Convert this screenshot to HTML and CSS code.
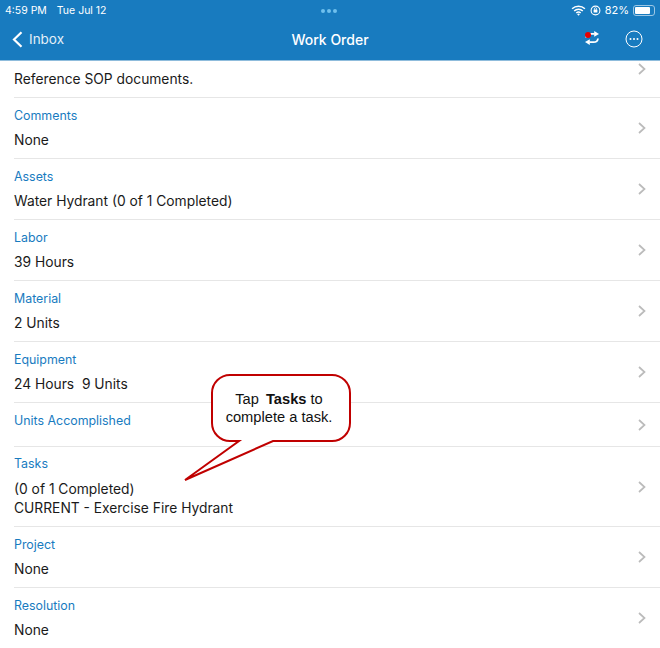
FILE: index.html
```html
<!DOCTYPE html>
<html lang="en">
<head>
<meta charset="utf-8">
<title>Work Order</title>
<link rel="stylesheet" href="styles.css">
</head>
<body>
<div class="page">
  <header class="header">
    <div class="status">
      <div class="status-left"><span>4:59 PM</span><span>Tue Jul 12</span></div>
      <div class="dots"><i></i><i></i><i></i></div>
      <div class="status-right">
        <svg class="wifi" width="15" height="11" viewBox="0 0 16 12"><path d="M1 4.200a10 10 0 0 1 14 0M3.300 6.600a6.800 6.800 0 0 1 9.400 0M5.600 8.800a3.400 3.400 0 0 1 4.800 0" fill="none" stroke="#fff" stroke-width="1.600"/><path d="M8 11.600 6.500 10a2.200 2.200 0 0 1 3 0z" fill="#fff"/></svg>
        <svg class="lock" width="11" height="11" viewBox="0 0 11 11"><circle cx="5.500" cy="5.500" r="4.400" fill="none" stroke="#fff" stroke-width="1.100"/><rect x="3.600" y="4.600" width="3.800" height="3" rx=".5" fill="#fff"/><path d="M4.400 4.800V3.800a1.100 1.100 0 0 1 2.200 0v1" fill="none" stroke="#fff" stroke-width=".8"/></svg>
        <span class="pct">82%</span>
        <div class="battery"><div class="battery-fill"></div></div>
      </div>
    </div>
    <div class="nav">
      <div class="back">
        <svg width="11" height="17" viewBox="0 0 11 17"><path d="M9.500 1.200 2 8.500l7.500 7.300" fill="none" stroke="#fff" stroke-width="2.200"/></svg>
        <span>Inbox</span>
      </div>
      <div class="title">Work Order</div>
      <div class="actions">
        <div class="sync">
          <svg width="14" height="14" viewBox="0 0 14 14"><path d="M1 6.500C1.300 3.800 3.400 2.800 5.500 2.800H9.500" fill="none" stroke="#fff" stroke-width="1.800"/><path d="M9.200 0 14 2.900 9.200 5.800z" fill="#fff"/><path d="M13 7.500C12.700 10.200 10.600 11.200 8.500 11.200H4.500" fill="none" stroke="#fff" stroke-width="1.800"/><path d="M4.800 14 0 11.100 4.800 8.200z" fill="#fff"/></svg>
          <span class="sync-dot"></span>
        </div>
        <svg width="18" height="18" viewBox="0 0 18 18"><circle cx="9" cy="9" r="8" fill="none" stroke="#fff" stroke-width="1"/><circle cx="5.500" cy="9" r="1" fill="#fff"/><circle cx="9" cy="9" r="1" fill="#fff"/><circle cx="12.500" cy="9" r="1" fill="#fff"/></svg>
      </div>
    </div>
  </header>
  <main class="list">
    <div class="row row-first"><div class="value">Reference SOP documents.</div><svg class="chev chev-first" width="8" height="12" viewBox="0 0 8 12"><path d="M1 1l5.500 5L1 11" fill="none" stroke="#bbb" stroke-width="1.700"/></svg></div>
    <div class="row"><div><div class="label">Comments</div><div class="value">None</div></div><svg class="chev" width="8" height="12" viewBox="0 0 8 12"><path d="M1 1l5.500 5L1 11" fill="none" stroke="#bbb" stroke-width="1.700"/></svg></div>
    <div class="row"><div><div class="label">Assets</div><div class="value">Water Hydrant (0 of 1 Completed)</div></div><svg class="chev" width="8" height="12" viewBox="0 0 8 12"><path d="M1 1l5.500 5L1 11" fill="none" stroke="#bbb" stroke-width="1.700"/></svg></div>
    <div class="row"><div><div class="label">Labor</div><div class="value">39 Hours</div></div><svg class="chev" width="8" height="12" viewBox="0 0 8 12"><path d="M1 1l5.500 5L1 11" fill="none" stroke="#bbb" stroke-width="1.700"/></svg></div>
    <div class="row"><div><div class="label">Material</div><div class="value">2 Units</div></div><svg class="chev" width="8" height="12" viewBox="0 0 8 12"><path d="M1 1l5.500 5L1 11" fill="none" stroke="#bbb" stroke-width="1.700"/></svg></div>
    <div class="row"><div><div class="label">Equipment</div><div class="value">24 Hours&nbsp; 9 Units</div></div><svg class="chev" width="8" height="12" viewBox="0 0 8 12"><path d="M1 1l5.500 5L1 11" fill="none" stroke="#bbb" stroke-width="1.700"/></svg></div>
    <div class="row row-short"><div><div class="label">Units Accomplished</div></div><svg class="chev" width="8" height="12" viewBox="0 0 8 12"><path d="M1 1l5.500 5L1 11" fill="none" stroke="#bbb" stroke-width="1.700"/></svg></div>
    <div class="row row-tall"><div><div class="label">Tasks</div><div class="value">(0 of 1 Completed)</div><div class="value value-tight">CURRENT - Exercise Fire Hydrant</div></div><svg class="chev" width="8" height="12" viewBox="0 0 8 12"><path d="M1 1l5.500 5L1 11" fill="none" stroke="#bbb" stroke-width="1.700"/></svg></div>
    <div class="row"><div><div class="label">Project</div><div class="value">None</div></div><svg class="chev" width="8" height="12" viewBox="0 0 8 12"><path d="M1 1l5.500 5L1 11" fill="none" stroke="#bbb" stroke-width="1.700"/></svg></div>
    <div class="row"><div><div class="label">Resolution</div><div class="value">None</div></div><svg class="chev" width="8" height="12" viewBox="0 0 8 12"><path d="M1 1l5.500 5L1 11" fill="none" stroke="#bbb" stroke-width="1.700"/></svg></div>
  </main>
  <div class="callout">
    <svg width="180" height="116" viewBox="0 0 180 116"><path d="M46 1h102a18 18 0 0 1 18 18v30a18 18 0 0 1-18 18H89L1 106 55 67h-9a18 18 0 0 1-18-18V19a18 18 0 0 1 18-18z" fill="#fff" stroke="#c00000" stroke-width="2"/></svg>
    <div class="callout-text">Tap <b class="callout-strong">Tasks</b> to<br>complete a task.</div>
  </div>
</div>
</body>
</html>
```
FILE: styles.css
```css
* { box-sizing: border-box; }
html, body { margin: 0; padding: 0; }
body { background: #fff; font-family: "Inter", "Liberation Sans", sans-serif; color: #111; }
.page { position: relative; width: 660px; height: 648px; overflow: hidden; }
.header { height: 61px; background: #187bbf; color: #fff; border-bottom: 1px solid #8fbcdc; }
.status { height: 18px; padding: 2px 5px 0 5px; display: flex; justify-content: space-between; align-items: center; font-size: 10.500px; position: relative; }
.status-left { display: flex; gap: 10px; }
.status-right { display: flex; align-items: center; gap: 4px; }
.pct { font-size: 11px; }
.dots { position: absolute; left: 321px; top: 9px; display: flex; gap: 2px; }
.dots i { width: 4px; height: 4px; border-radius: 50%; background: #6fc0ee; }
.battery { width: 22px; height: 11px; border: 1px solid #9cc7e5; border-radius: 3px; padding: 1px; }
.battery-fill { width: 82%; height: 100%; background: #fff; border-radius: 1px; }
.nav { height: 42px; display: flex; align-items: center; justify-content: space-between; padding: 0 17px 0 12px; position: relative; }
.back { display: flex; align-items: center; gap: 6px; font-size: 13.500px; color: #e3eff8; }
.title { position: absolute; left: 0; right: 0; text-align: center; font-size: 14px; font-weight: 500; }
.actions { display: flex; align-items: center; gap: 26px; }
.sync { position: relative; width: 14px; height: 14px; margin-bottom: 2px; }
.sync svg { display: block; }
.sync-dot { position: absolute; left: 0; top: 1px; width: 6px; height: 6px; border-radius: 50%; background: #e60000; }
.list { padding-left: 14px; }
.row { height: 61px; border-bottom: 1px solid #e6e6e6; display: flex; justify-content: space-between; align-items: center; padding-right: 14px; }
.row-first { height: 37px; position: relative; }
.row-short { height: 44px; align-items: flex-start; padding-top: 9px; }
.row-short .chev { margin-top: 7px; }
.row-tall { height: 80px; }
.label { font-size: 12.400px; line-height: 16px; color: #187bbf; padding-top: 1px; height: 17px; margin-bottom: 7px; }
.row-tall .label { padding-top: 0; height: 16px; margin-bottom: 8px; }
.value { font-size: 13.800px; line-height: 18px; color: #1a1a1a; }
.value-tight { margin-top: 1px; }
.chev { flex: none; }
.chev-first { position: absolute; right: 14px; top: 2px; }
.callout { position: absolute; left: 184px; top: 374px; width: 180px; height: 116px; }
.callout svg { position: absolute; left: 0; top: 0; overflow: visible; }
.callout-text { position: absolute; left: 26px; top: 16px; width: 138px; text-align: center; font-family: "Liberation Sans", Arial, sans-serif; font-size: 14.670px; line-height: 18px; color: #111; }
.callout-strong { margin-left: 3px; }
```
